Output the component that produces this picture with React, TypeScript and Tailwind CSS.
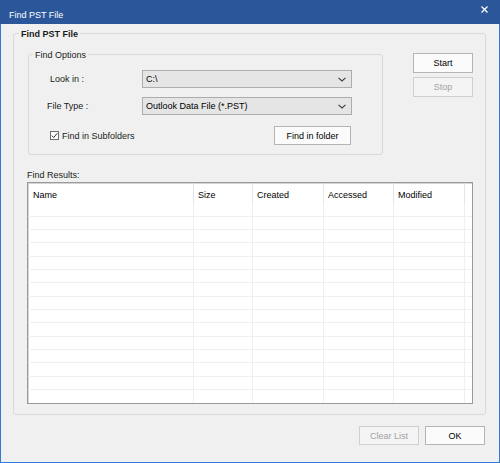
import React from "react";

const rowHeights = [14, 13, 13, 14, 13, 13, 14, 13, 13, 14, 13, 13, 14, 13];

function Cells() {
  return (
    <>
      <div className="w-[166px] h-full border-r border-[#efefef]" />
      <div className="w-[59px] h-full border-r border-[#efefef]" />
      <div className="w-[71px] h-full border-r border-[#efefef]" />
      <div className="w-[70px] h-full border-r border-[#efefef]" />
      <div className="w-[71px] h-full border-r border-[#efefef]" />
      <div className="flex-1 h-full" />
    </>
  );
}

function Chevron() {
  return (
    <svg width="8" height="5" viewBox="0 0 8 5" className="shrink-0">
      <path d="M0.5 0.8 L4 4 L7.5 0.8" fill="none" stroke="#3c3c3c" strokeWidth="1.1" />
    </svg>
  );
}

export default function App() {
  return (
    <div className="w-[500px] h-[463px] bg-[#f0f0f0] flex flex-col font-['Liberation_Sans',Arial,sans-serif] text-[9px] leading-[10px] text-black overflow-hidden">
      {/* Title bar */}
      <div className="h-[24px] shrink-0 bg-[#2b579a] flex items-start justify-between">
        <span className="text-white pl-[9px] pt-[10px] leading-[10px]">Find PST File</span>
        <svg width="7" height="7" viewBox="0 0 7 7" className="mt-[6px] mr-[12px]">
          <path d="M0.5 0.5 L6.5 6.5 M6.5 0.5 L0.5 6.5" stroke="#ffffff" strokeWidth="1.3" />
        </svg>
      </div>

      {/* Body */}
      <div className="flex-1 flex flex-col border-x border-b border-[#2f7bd6] pl-[12px] pr-[14px]">
        {/* Outer group */}
        <div className="relative mt-[9px] w-[473px] border border-[#d9d9d9] rounded-[3px] pl-[13px] pt-[19px] pb-[10px]">
          <span className="absolute left-[5px] -top-[5px] px-[2px] bg-[#f0f0f0] font-bold text-[9px] leading-[10px] text-[#1a1a1a]">
            Find PST File
          </span>

          <div className="flex items-start">
            {/* Find Options group */}
            <div className="relative ml-[1px] mt-[1px] w-[355px] h-[101px] border border-[#d9d9d9] rounded-[3px] flex flex-col pl-[21px] pt-[15px]">
              <span className="absolute left-[4px] -top-[5px] px-[2px] bg-[#f0f0f0] text-[#1a1a1a]">
                Find Options
              </span>

              <div className="flex items-center">
                <span className="w-[92px] text-[#1a1a1a]">Look in :</span>
                <div className="w-[210px] h-[18px] bg-[#e5e5e5] border border-[#adadad] flex items-center justify-between pl-[3px] pr-[5px]">
                  <span>C:\</span>
                  <Chevron />
                </div>
              </div>

              <div className="flex items-center mt-[9px]">
                <span className="-ml-[3px] w-[95px] text-[#1a1a1a]">File Type :</span>
                <div className="w-[210px] h-[18px] bg-[#e5e5e5] border border-[#adadad] flex items-center justify-between pl-[3px] pr-[5px]">
                  <span>Outlook Data File (*.PST)</span>
                  <Chevron />
                </div>
              </div>

              <div className="flex items-center mt-[11px] w-[301px]">
                <div className="w-[9px] h-[9px] border border-[#6e6e6e] bg-white flex items-center justify-center">
                  <svg width="7" height="7" viewBox="0 0 7 7">
                    <path d="M0.8 3.6 L2.7 5.5 L6.3 1.2" fill="none" stroke="#333333" strokeWidth="1" />
                  </svg>
                </div>
                <span className="ml-[3px] text-[#1a1a1a]">Find in Subfolders</span>
                <div className="ml-auto w-[77px] h-[19px] bg-[#fbfbfb] border border-[#b5b5b5] flex items-center justify-center">
                  Find in folder
                </div>
              </div>
            </div>

            {/* Start / Stop */}
            <div className="ml-[30px] flex flex-col gap-[4px]">
              <div className="w-[60px] h-[20px] bg-[#fbfbfb] border border-[#b5b5b5] flex items-center justify-center">
                Start
              </div>
              <div className="w-[60px] h-[20px] bg-[#f4f4f4] border border-[#cfcfcf] flex items-center justify-center text-[#a3a3a3]">
                Stop
              </div>
            </div>
          </div>

          <div className="mt-[15px] text-[#1a1a1a]">Find Results:</div>

          {/* Results list */}
          <div className="mt-[2px] w-[446px] h-[222px] bg-white border border-[#9a9a9a] shadow-[inset_1px_1px_0_#d4d4d4] flex flex-col">
            <div className="h-[20px] flex shrink-0">
              <div className="w-[166px] h-full border-r border-[#e5e5e5] pl-[5px] pt-[7px]">Name</div>
              <div className="w-[59px] h-full border-r border-[#e5e5e5] pl-[4px] pt-[7px]">Size</div>
              <div className="w-[71px] h-full border-r border-[#e5e5e5] pl-[4px] pt-[7px]">Created</div>
              <div className="w-[70px] h-full border-r border-[#e5e5e5] pl-[4px] pt-[7px]">Accessed</div>
              <div className="w-[71px] h-full border-r border-[#e5e5e5] pl-[4px] pt-[7px]">Modified</div>
              <div className="flex-1 h-full" />
            </div>
            {rowHeights.map((h, i) => (
              <div
                key={i}
                className={(h === 14 ? "h-[14px]" : "h-[13px]") + " flex shrink-0 border-b border-[#efefef]"}
              >
                <Cells />
              </div>
            ))}
            <div className="flex-1 flex">
              <Cells />
            </div>
          </div>
        </div>

        {/* Bottom buttons */}
        <div className="mt-[11px] flex justify-end gap-[6px]">
          <div className="w-[60px] h-[19px] bg-[#f4f4f4] border border-[#cfcfcf] flex items-center justify-center text-[#a3a3a3]">
            Clear List
          </div>
          <div className="w-[60px] h-[19px] bg-[#fbfbfb] border border-[#b5b5b5] flex items-center justify-center">
            OK
          </div>
        </div>
      </div>
    </div>
  );
}
